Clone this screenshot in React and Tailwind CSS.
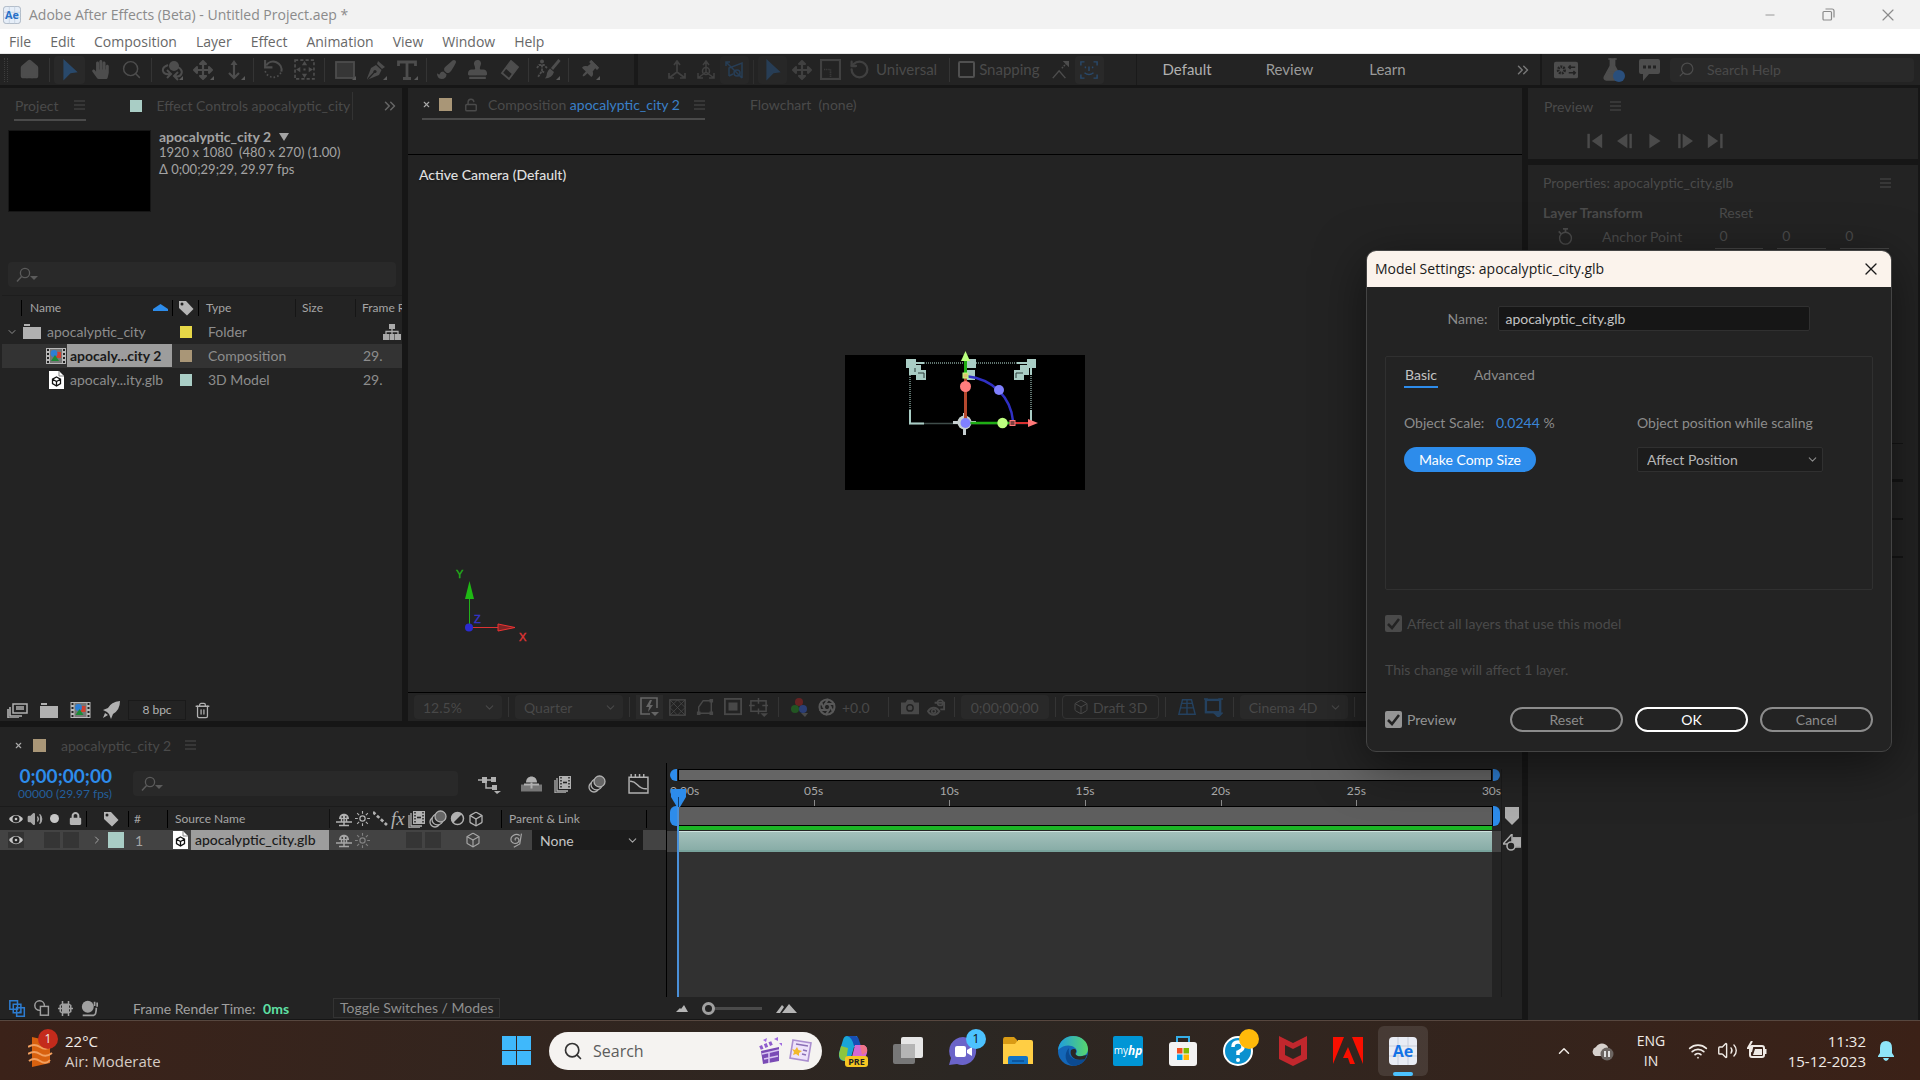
import {
  Home, Search, RotateCcw, X, Minus, LockOpen, Aperture, Trash2, ChevronDown,
  ChevronRight, ChevronUp, ChevronsRight, Wifi, Volume2, Box, FlaskConical,
} from "lucide-react";
import { FaHandPaper, FaEraser, FaStamp, FaPaintBrush, FaThumbtack, FaArrowsAlt, FaLock } from "react-icons/fa";

const menus = ["File", "Edit", "Composition", "Layer", "Effect", "Animation", "View", "Window", "Help"];

const rulerMarks = ["05s", "10s", "15s", "20s", "25s"];

function Svg({ w = 20, h, vb, className = "", children }) {
  return (
    <svg
      width={w}
      height={h || w}
      viewBox={vb || "0 0 20 20"}
      fill="none"
      stroke="currentColor"
      strokeWidth="1.6"
      className={`shrink-0 ${className}`}
      aria-hidden="true"
    >
      {children}
    </svg>
  );
}

function Divider({ className = "mx-1 h-6" }) {
  return <span className={`w-px shrink-0 bg-[#343434] ${className}`} />;
}

function Tool({ label, active, more, className = "w-[31px]", children }) {
  return (
    <button
      aria-label={label}
      className={`relative flex h-7 shrink-0 items-center justify-center rounded-sm ${className} ${
        active ? "bg-[#292929] text-[#29496b]" : "text-[#4d4d4d]"
      }`}
    >
      {children}
      {more && (
        <svg width="4" height="4" className="absolute right-1 bottom-1" aria-hidden="true">
          <path d="M4 0V4H0Z" fill="#5a5a5a" />
        </svg>
      )}
    </button>
  );
}

function Burger({ className = "" }) {
  return (
    <button aria-label="Panel menu" className={`text-[#4d4d4d] ${className}`}>
      <Svg w={11} h={10} vb="0 0 11 10">
        <path d="M0 1H11M0 5H11M0 9H11" strokeWidth="1" />
      </Svg>
    </button>
  );
}

function FieldSearch({ label, className = "" }) {
  return (
    <label className={`flex h-[25px] items-center rounded-sm bg-[#292929] px-2 text-[#5b5b5b] ${className}`}>
      <Svg w={22} h={16} vb="0 0 22 16">
        <circle cx="9" cy="6" r="4.6" strokeWidth="1.3" />
        <path d="M5.6 9.4 1 14.5" strokeWidth="1.5" />
        <path d="M14 9H22L18 13Z" fill="currentColor" stroke="none" />
      </Svg>
      <input aria-label={label} className="min-w-0 flex-1 bg-transparent outline-none" />
    </label>
  );
}

function CursorIcon() {
  return (
    <Svg w={22}>
      <path d="M4 0 17 12 10.500 13 4 19.500Z" fill="currentColor" stroke="none" />
    </Svg>
  );
}

function FilmIcon({ w = 20 }) {
  return (
    <Svg w={w} h={16} vb="0 0 20 16">
      <rect width="20" height="16" fill="#b9b9b9" stroke="none" />
      <path d="M2 1V15M18 1V15" stroke="#222" strokeWidth="2" strokeDasharray="2 2" />
      <rect x="4" y="1" width="12" height="14" fill="#777" stroke="none" />
      <rect x="10" y="4" width="5" height="6" fill="#d2402f" stroke="none" />
      <circle cx="8" cy="5.500" r="3.400" fill="#2d7fd4" stroke="none" />
      <path d="M9 7 13 13H5Z" fill="#1c8a35" stroke="none" />
    </Svg>
  );
}

function ModelIcon() {
  return (
    <Svg w={15} h={18} vb="0 0 15 18">
      <path d="M0 0H10L15 5V18H0Z" fill="#fff" stroke="none" />
      <path d="M10 0V5H15" stroke="#888" strokeWidth="1" />
      <path d="M7.500 6 11.500 8.200V12.600L7.500 15 3.500 12.600V8.200ZM3.500 8.200 7.500 10.500 11.500 8.200M7.500 10.500V15" stroke="#111" strokeWidth="1.300" />
    </Svg>
  );
}

function FolderIcon() {
  return (
    <Svg w={18} h={15} vb="0 0 18 15">
      <path d="M1 0H7V2H1Z M0 3H18V15H0Z" fill="#b1b1b1" stroke="none" />
    </Svg>
  );
}

function TagIcon() {
  return (
    <Svg w={16} h={16} vb="0 0 16 16">
      <path d="M1 1H8L15.500 9 9 15.500 1 8Z" fill="#b5b5b5" stroke="none" />
      <circle cx="4" cy="4" r="1.500" fill="#232323" stroke="none" />
    </Svg>
  );
}

function EyeIcon() {
  return (
    <Svg w={14} h={12} vb="0 0 14 12">
      <path d="M0 6C3 .5 11 .5 14 6 11 11.500 3 11.500 0 6Z" fill="#c6c6c6" stroke="none" />
      <circle cx="7" cy="6" r="3.500" fill="#232323" stroke="none" />
      <circle cx="7" cy="6" r="1.300" fill="#c6c6c6" stroke="none" />
    </Svg>
  );
}

function ShyIcon() {
  return (
    <Svg w={16} vb="0 0 16 16">
      <path d="M3 8C3 1 13 1 13 8Z" fill="currentColor" stroke="none" />
      <path d="M0 11H16M8 8V15M3 14.500H13M5.500 8V11M10.500 8V11" strokeWidth="1.500" />
      <path d="M5.500 6H7M9 6H10.500" stroke="#232323" strokeWidth="1.500" />
    </Svg>
  );
}

function SunIcon() {
  return (
    <Svg w={15} vb="0 0 16 16">
      <circle cx="8" cy="8" r="2.800" strokeWidth="1.300" />
      <path d="M8 0V3M8 13V16M0 8H3M13 8H16M2.300 2.300 4.400 4.400M11.600 11.600 13.700 13.700M2.300 13.700 4.400 11.600M11.600 4.400 13.700 2.300" strokeWidth="1.200" />
    </Svg>
  );
}

function FrameBlendIcon() {
  return (
    <Svg w={18} vb="0 0 18 18">
      <path d="M5 1H17V14H5Z" fill="currentColor" stroke="none" />
      <path d="M7 2V13M15 2V13" stroke="#232323" strokeWidth="1.500" strokeDasharray="1.500 1.500" />
      <path d="M9 7.500H13" stroke="#232323" />
      <path d="M3 3V16H14M1 5V18H12" strokeWidth="1.300" />
    </Svg>
  );
}

function BlurIcon() {
  return (
    <Svg w={18} vb="0 0 18 18">
      <circle cx="6" cy="12" r="5" strokeWidth="1.300" />
      <circle cx="8.500" cy="9.500" r="5.500" fill="#232323" strokeWidth="1.300" />
      <circle cx="11.500" cy="6.500" r="5.500" fill="#666" strokeWidth="1.300" />
    </Svg>
  );
}

function TitleBar() {
  return (
    <header>
      <div className="flex h-[29px] items-center bg-[#f2f2f2] pr-[3px] pl-[3px] font-['Open_Sans',sans-serif] text-[14px] text-[#8b8b8b]">
        <Svg w={18}>
          <rect x=".5" y=".5" width="19" height="19" rx="3" fill="#e6eef8" stroke="#a9b4c2" strokeWidth="1" />
          <path d="M7 0V20M13 0V20M0 7H20M0 13H20" stroke="#bcc9d8" strokeWidth=".7" />
          <text x="10" y="14" textAnchor="middle" fontSize="12" fontWeight="700" fill="#2a72c8" stroke="none">Ae</text>
        </Svg>
        <h1 className="ml-2 flex-1">Adobe After Effects (Beta) - Untitled Project.aep *</h1>
        <button aria-label="Minimize" className="w-[59px]"><Minus size={14} strokeWidth={1.5} className="mx-auto" /></button>
        <button aria-label="Restore" className="w-[59px]">
          <Svg w={13} vb="0 0 13 13" className="mx-auto">
            <rect x="1" y="3.500" width="8.500" height="8.500" rx="1" strokeWidth="1.200" />
            <path d="M3.500 1H10Q12 1 12 3V9.500" strokeWidth="1.200" />
          </Svg>
        </button>
        <button aria-label="Close" className="w-[59px]"><X size={20} strokeWidth={1.4} className="mx-auto" /></button>
      </div>
      <nav className="flex h-[25px] items-center gap-px border-b border-[#e8e8e8] bg-white font-['Open_Sans',sans-serif] text-[14px] text-[#686868]">
        {menus.map((m) => (
          <button key={m} className="px-[9px]">{m}</button>
        ))}
      </nav>
    </header>
  );
}

function Toolbar() {
  return (
    <div className="flex h-[31px] shrink-0 items-center bg-[#232323] pl-1">
      <span className="mr-[6px] h-6 w-1 border-x border-dotted border-[#3c3c3c]" />
      <Tool label="Home"><Home size={21} fill="currentColor" /></Tool>
      <Divider />
      <Tool label="Selection tool" active><CursorIcon /></Tool>
      <Tool label="Hand tool"><FaHandPaper size={19} /></Tool>
      <Tool label="Zoom tool"><Search size={21} strokeWidth={1.7} /></Tool>
      <Divider />
      <Tool label="Orbit tool" more>
        <Svg w={22} vb="0 0 22 20">
          <circle cx="13" cy="6" r="5" fill="currentColor" stroke="none" />
          <path d="M7 5C-1 8 1 15 9 14M17 7C24 11 20 18 14 16M6 10 10 14 6 18M17 12 13 16 17 20" strokeWidth="2" />
        </Svg>
      </Tool>
      <Tool label="Pan tool" more><FaArrowsAlt size={20} /></Tool>
      <Tool label="Dolly tool" more>
        <Svg w={20}><path d="M10 2V17M5 13 10 18 15 13" strokeWidth="2.200" /><path d="M10 0 13.500 5H6.500Z" fill="currentColor" stroke="none" /></Svg>
      </Tool>
      <Divider />
      <Tool label="Rotation tool">
        <Svg w={21}><path d="M3 6A8 8 0 0 1 17.500 12" strokeWidth="2" /><path d="M17 13A8 8 0 0 1 2 11" strokeDasharray="1.500 2" /><path d="M2 1V8H9" strokeWidth="2" /></Svg>
      </Tool>
      <Tool label="Pan behind tool">
        <Svg w={21}>
          <rect x="1" y="1" width="18" height="18" strokeDasharray="3 2" />
          <path d="M10 2 12.500 6H7.500ZM10 18 12.500 14H7.500ZM2 10 6 7.500V12.500ZM18 10 14 7.500V12.500ZM9 9H11V11H9Z" fill="currentColor" stroke="none" />
        </Svg>
      </Tool>
      <Divider />
      <Tool label="Rectangle tool" more><Svg w={20}><rect x="1" y="2" width="18" height="16" fill="#363636" strokeWidth="1.800" /></Svg></Tool>
      <Tool label="Pen tool" more>
        <Svg w={20}>
          <path d="M12 1 19 7 16 9 11 4Z" fill="currentColor" stroke="none" />
          <path d="M10 5 15.500 10 13 15 2 19.500 1 18.500 5 8Z" fill="currentColor" stroke="none" />
          <path d="M2 19 8.500 12" stroke="#232323" strokeWidth="1.200" />
          <circle cx="9" cy="11.500" r="1.600" fill="#232323" stroke="none" />
        </Svg>
      </Tool>
      <Tool label="Type tool" more>
        <Svg w={20}><path d="M1.500 6V2H18.500V6M10 2V18M6 18.500H14" strokeWidth="2.800" /></Svg>
      </Tool>
      <Divider />
      <Tool label="Brush tool"><FaPaintBrush size={19} /></Tool>
      <Tool label="Clone stamp tool"><FaStamp size={19} /></Tool>
      <Tool label="Eraser tool">
        <Svg w={20}>
          <path d="M12 1 19 7 10 19 3 13Z" strokeWidth="1.800" />
          <path d="M12 1 19 7 13.500 14.500 6.500 8.500Z" fill="currentColor" stroke="none" />
        </Svg>
      </Tool>
      <Divider />
      <Tool label="Roto brush tool" more>
        <Svg w={25} h={21} vb="0 0 25 21">
          <circle cx="6" cy="2.500" r="2" fill="currentColor" stroke="none" />
          <path d="M1 9 3 6H8L11 9M6 6V12L2 18M6 12 9 14" strokeWidth="1.800" strokeDasharray="2.500 1" />
          <path d="M23.500 1 16 10" strokeWidth="2.800" />
          <path d="M14 9.500 18 13Q16 19 9 19.500 11 17 11 14 12 11 14 9.500Z" fill="currentColor" stroke="none" />
        </Svg>
      </Tool>
      <Divider />
      <Tool label="Puppet pin tool" more><FaThumbtack size={18} className="rotate-45" /></Tool>
      <span className="mx-[30px] h-full w-1 bg-[#191919]" />
      <div className="-ml-[6px] flex opacity-70">
        <Tool label="Local axis mode" className="w-[29px]">
          <Svg w={20}><path d="M10 12V2M10 12 2 18M10 12 18 18M7 5 10 1 13 5M2 13V18H7M18 13V18H13" strokeWidth="1.700" /></Svg>
        </Tool>
        <Tool label="World axis mode" className="w-[29px]">
          <Svg w={20}><circle cx="10" cy="11" r="3.500" /><path d="M10 12V2M10 12 2 18M10 12 18 18M7 5 10 1 13 5M2 13V18H7M18 13V18H13" strokeWidth="1.500" /></Svg>
        </Tool>
        <Tool label="View axis mode" active className="w-[29px]">
          <Svg w={20}><path d="M4 16V8L17 3V17L13 15M1 2 17 18M1 6V2H5M4 16 8 14" strokeWidth="1.500" /><circle cx="12" cy="13" r="3" /></Svg>
        </Tool>
        <Divider className="mx-1 mt-1 h-6" />
        <Tool label="Universal gizmo" active className="w-[29px]"><CursorIcon /></Tool>
        <Tool label="Position gizmo" className="w-[29px]"><FaArrowsAlt size={20} /></Tool>
        <Tool label="Scale gizmo" className="w-[29px]"><Svg w={21}><rect x="1" y="1" width="18" height="18" strokeWidth="2" /><path d="M4 10H10V17" strokeDasharray="1 1" /></Svg></Tool>
        <Tool label="Rotation gizmo" className="w-[29px]"><RotateCcw size={21} strokeWidth={2.6} /></Tool>
      </div>
      <span className="ml-[2px] text-[15px] text-[#4a4a4a]">Universal</span>
      <Divider className="mr-2 ml-3 h-6" />
      <label className="flex items-center gap-1 text-[15px] text-[#4a4a4a]">
        <input type="checkbox" className="size-[17px] appearance-none rounded-xs border-2 border-[#505050]" />
        Snapping
      </label>
      <Tool label="Snap edges" className="ml-[6px] w-[29px]">
        <Svg w={18}><path d="M2 19 9 11 16 19" strokeWidth="1.600" /><path d="M12 8 17 3" strokeDasharray="2 1" /><path d="M13 0H20V7Z" fill="currentColor" stroke="none" /></Svg>
      </Tool>
      <Tool label="Snap features" active className="w-[29px]">
        <Svg w={18}><path d="M1 5V1H5M15 1H19V5M19 15V19H15M5 19H1V15M6 6V8M14 6V8M10 6V11M5 13Q10 17 15 13" strokeWidth="1.600" /></Svg>
      </Tool>
      <div className="ml-8 flex h-full flex-1 items-center border-l border-[#1a1a1a] pl-[26px] text-[15px] text-[#9a9a9a]">
        <button className="text-[#b0b0b0]">Default</button>
        <button className="ml-[54px]">Review</button>
        <button className="ml-[56px]">Learn</button>
        <button aria-label="More workspaces" className="ml-auto text-[#777]"><ChevronsRight size={18} /></button>
      </div>
      <span className="ml-2 h-full w-[2px] bg-[#191919]" />
      <div className="flex items-center gap-[10px] pr-[6px] pl-3 text-[#4d4d4d]">
        <button aria-label="Settings">
          <Svg w={24} h={18} vb="0 0 26 18">
            <rect width="26" height="18" rx="2" fill="currentColor" stroke="none" />
            <circle cx="8" cy="9" r="3.500" stroke="#232323" strokeWidth="3" strokeDasharray="2 1" />
            <path d="M16 6H23M18 4 16 6 18 8M16 12H23M21 10 23 12 21 14" stroke="#232323" />
          </Svg>
        </button>
        <button aria-label="Beta feedback" className="relative ml-3">
          <FlaskConical size={25} fill="#4d4d4d" strokeWidth={1.5} />
          <span className="absolute right-0 bottom-0 size-3 rounded-full bg-[#2a4f7c]" />
        </button>
        <button aria-label="Comments" className="ml-1">
          <Svg w={21} h={22} vb="0 0 21 22">
            <path d="M2 0H19Q21 0 21 2V13Q21 15 19 15H10L4 22V15H2Q0 15 0 13V2Q0 0 2 0Z" fill="currentColor" stroke="none" />
            <path d="M4 8H7M9 8H12M14 8H17" stroke="#232323" strokeWidth="3" />
          </Svg>
        </button>
        <label className="flex h-6 w-[244px] items-center gap-3 rounded-sm bg-[#292929] px-2">
          <Search size={17} strokeWidth={1.7} className="-scale-x-100" />
          <input aria-label="Search Help" placeholder="Search Help" className="min-w-0 flex-1 bg-transparent text-[14px] outline-none placeholder:text-[#4a4a4a]" />
        </label>
      </div>
    </div>
  );
}

const assets = [
  { name: "apocaly...city 2", type: "Composition", color: "bg-[#a99677]", icon: <FilmIcon />, selected: true },
  { name: "apocaly...ity.glb", type: "3D Model", color: "bg-[#a9cdc5]", icon: <ModelIcon /> },
];

function ProjectPanel() {
  return (
    <section className="flex w-[402px] shrink-0 flex-col bg-[#232323] pl-[2px]">
      <div className="flex h-9 shrink-0 items-center pr-[3px] pl-3 text-[14px] text-[#4a4a4a]">
        <button className="flex h-[30px] items-center gap-4 border-b-2 border-[#4a4a4a] px-px">
          Project
          <Svg w={11} h={10} vb="0 0 11 10"><path d="M0 1H11M0 5H11M0 9H11" strokeWidth="1" /></Svg>
        </button>
        <span className="ml-11 size-3 shrink-0 bg-[#a9cdc5]" />
        <button className="ml-[14px] min-w-0 flex-1 overflow-hidden border-r border-[#333] text-left leading-7 whitespace-nowrap">Effect Controls apocalyptic_city</button>
        <button aria-label="More panels" className="ml-7 text-[#666]"><ChevronsRight size={18} /></button>
      </div>
      <div className="flex gap-2 px-[6px] pt-[6px]">
        <div className="h-[82px] w-[143px] border border-[#161616] bg-black" />
        <div className="text-[13px] leading-[17px] text-[#a3a3a3]">
          <p className="flex items-center gap-2 text-[14px] leading-[14px] font-bold">
            apocalyptic_city 2
            <Svg w={10} h={8} vb="0 0 10 8"><path d="M0 0H10L5 8Z" fill="currentColor" stroke="none" /></Svg>
          </p>
          <p className="whitespace-pre">1920 x 1080  (480 x 270) (1.00)</p>
          <p>Δ 0;00;29;29, 29.97 fps</p>
        </div>
      </div>
      <FieldSearch label="Search project" className="mx-[6px] mt-[50px] shrink-0" />
      <table className="mt-2 w-full table-fixed border-t border-[#1d1d1d] text-left text-[14px] whitespace-nowrap text-[#8d8d8d]">
        <colgroup>
          <col className="w-[170px]" />
          <col className="w-[27px]" />
          <col className="w-[96px]" />
          <col className="w-[60px]" />
          <col />
        </colgroup>
        <thead>
          <tr className="h-6 text-[12px] text-[#a5a5a5]">
            <th className="pl-[19px] font-normal">
              <span className="flex h-4 items-center justify-between border-l border-black pr-1 pl-2">
                Name
                <Svg w={15} h={7} vb="0 0 15 7"><path d="M7.500 0 15 5V7H0V5Z" fill="#2d8ceb" stroke="none" /></Svg>
              </span>
            </th>
            <th aria-label="Label"><span className="flex h-4 items-center justify-center border-x border-black"><TagIcon /></span></th>
            <th className="pl-[7px] font-normal">Type</th>
            <th className="font-normal"><span className="block border-l border-[#161616] pl-[6px]">Size</span></th>
            <th className="overflow-hidden font-normal"><span className="block border-l border-[#161616] pl-[6px]">Frame R</span></th>
          </tr>
        </thead>
        <tbody>
          <tr className="h-6">
            <td>
              <span className="flex items-center pl-1">
                <ChevronDown size={12} />
                <span className="mr-[6px] ml-[5px]"><FolderIcon /></span>
                apocalyptic_city
              </span>
            </td>
            <td><span className="mx-auto block size-3 bg-[#e6d747]" /></td>
            <td className="pl-[9px]">Folder</td>
            <td />
            <td>
              <Svg w={18} h={16} vb="0 0 18 16" className="ml-[28px]">
                <path d="M6 0H12V5H6ZM0 10H6V16H0ZM12 10H18V16H12ZM6.500 10H11.500V16H6.500Z" fill="#aaa" stroke="none" />
                <path d="M9 5V10M3 10V7.500H15V10" stroke="#aaa" strokeWidth="1.300" />
              </Svg>
            </td>
          </tr>
          {assets.map((a) => (
            <tr key={a.name} className={a.selected ? "h-6 bg-[#333]" : "h-6"}>
              <td>
                <span className="flex items-center pl-11">
                  <span className="flex w-5 shrink-0 justify-center">{a.icon}</span>
                  <span className={a.selected ? "ml-px flex-1 bg-[#9d9d9d] pl-[3px] leading-[23px] font-bold text-[#1a1a1a]" : "ml-1"}>{a.name}</span>
                </span>
              </td>
              <td><span className={`mx-auto block size-3 ${a.color}`} /></td>
              <td className="pl-[9px]">{a.type}</td>
              <td />
              <td className="pl-2">29.</td>
            </tr>
          ))}
        </tbody>
      </table>
      <div className="mt-auto flex h-7 items-center gap-3 pt-[6px] pl-[5px] text-[#b1b1b1]">
        <button aria-label="Interpret footage">
          <Svg w={21} h={15} vb="0 0 21 15">
            <path d="M6 1H20V10H6Z" strokeWidth="1.500" /><path d="M9 4H17M9 6H17" strokeWidth="1.500" />
            <path d="M3 4V13H15M1 6V15H12" />
          </Svg>
        </button>
        <button aria-label="New folder"><FolderIcon /></button>
        <button aria-label="New composition"><FilmIcon w={21} /></button>
        <button aria-label="GPU acceleration">
          <Svg w={17} h={18} vb="0 0 17 18"><path d="M17 0Q8 1 5 7L0 9 4 11 6 13 8 18 10 13Q17 9 17 0ZM0 17 2 12 5 14Z" fill="currentColor" stroke="none" /></Svg>
        </button>
        <button className="-mx-1 h-5 w-[58px] border border-[#1a1a1a] text-[12px]">8 bpc</button>
        <button aria-label="Delete"><Trash2 size={17} strokeWidth={1.8} /></button>
      </div>
    </section>
  );
}

function Gizmo() {
  return (
    <svg width="240" height="135" viewBox="0 0 240 135" className="overflow-visible" role="img" aria-label="apocalyptic_city.glb transform gizmo">
      <rect width="240" height="135" fill="#000" />
      <g stroke="#a9cdc5" fill="none">
        <path d="M65 8H186V68.500H65Z" strokeWidth="1.500" strokeOpacity=".75" strokeDasharray="1 1" />
        <path d="M65 20V8H79M172 8H186V20M65 55V68.500H79M186 55V66M119 8H130" strokeWidth="2" />
      </g>
      <g fill="#a9cdc5">
        <path d="M61 4H71V13H61ZM66 10H76V20H66ZM71 15H81V25H71Z" />
        <path d="M182 4H191V13H182ZM175 10H184V20H175ZM169 15H179V25H169Z" />
        <path d="M121 4H131V13H121ZM120 15H130V25H120Z" />
        <path d="M73 18H79V23M178 18H171V23M70 17V13" fill="none" stroke="#2b3a38" />
      </g>
      <path d="M108 67.500H131M119.500 58V80" stroke="#c6cfd0" strokeWidth="3" />
      <circle cx="119.500" cy="67.500" r="7" fill="#c6cfd0" />
      <path d="M120.500 21C150 24 166 44 168 66" fill="none" stroke="#3030c4" strokeWidth="2.500" />
      <path d="M120.500 4V21" stroke="#1fae14" strokeWidth="3" />
      <path d="M120.500 21V65" stroke="#b5482e" strokeWidth="3" />
      <path d="M122 68H165" stroke="#1fae14" strokeWidth="2.500" />
      <path d="M170 68H184" stroke="#d93030" strokeWidth="2" />
      <path d="M120.500 -4 125 6H116Z" fill="#b9ff7e" />
      <path d="M193 68 183 64V72Z" fill="#ff7878" />
      <rect x="118" y="18" width="5" height="5" fill="#e0c070" stroke="#b9ff7e" />
      <rect x="165" y="65.500" width="5" height="5" fill="#804040" stroke="#ff7878" />
      <circle cx="120.500" cy="31.500" r="5.500" fill="#ff7d7d" />
      <circle cx="154" cy="35" r="5" fill="#8080ff" />
      <circle cx="157.500" cy="68" r="5.200" fill="#bdff80" />
      <circle cx="120.500" cy="68" r="5" fill="#8080ff" />
    </svg>
  );
}

function AxisWidget() {
  return (
    <svg width="90" height="80" viewBox="0 0 90 80" className="absolute bottom-12 left-[41px] font-['Liberation_Sans',sans-serif]" fontSize="11" role="img" aria-label="Axes">
      <path d="M20.500 63V30" stroke="#22b01a" />
      <path d="M20.500 17 25 35H16Z" fill="#1fb914" />
      <path d="M20 63.500H60" stroke="#d33" />
      <path d="M66 63.500 49 60V67Z" fill="#7c2525" stroke="#e33" />
      <circle cx="20" cy="63.500" r="4" fill="#2b2bd0" />
      <text x="7" y="14" fill="#22b01a" stroke="#22b01a" strokeWidth=".4">Y</text>
      <text x="25" y="59" fill="#3535cc" stroke="#3535cc" strokeWidth=".4">Z</text>
      <text x="70" y="77" fill="#e23535" stroke="#e23535" strokeWidth=".4">X</text>
    </svg>
  );
}

function FootSelect({ label, value, className }) {
  return (
    <span className={`relative flex h-6 items-center rounded-sm bg-[#292929] ${className}`}>
      <select aria-label={label} className="w-full appearance-none bg-transparent pl-[9px] outline-none">
        <option>{value}</option>
      </select>
      <ChevronDown size={13} className="pointer-events-none absolute right-[6px]" />
    </span>
  );
}

function ViewerFooter() {
  return (
    <div className="flex h-[29px] shrink-0 items-center overflow-hidden border-t border-black pl-[6px] text-[14px] text-[#484848]">
      <FootSelect label="Magnification" value="12.5%" className="w-[88px]" />
      <Divider className="mx-[6px] h-5" />
      <FootSelect label="Resolution" value="Quarter" className="w-[108px]" />
      <Divider className="mx-[6px] h-5" />
      <div className="flex items-center">
        <button aria-label="Fast previews" className="flex h-6 w-[27px] items-center justify-center bg-[#2a2a2a] text-[#666]">
          <Svg w={20}><path d="M17 11V1H1V17H10" /><path d="M10 3 6 10H9L8 15 13 8H10L12 3Z" fill="currentColor" stroke="none" /><path d="M11 15H19L15 19Z" fill="currentColor" stroke="none" /></Svg>
        </button>
        <button aria-label="Transparency grid" className="flex w-[28px] justify-center"><Svg w={17}><rect x="1" y="1" width="18" height="18" /><path d="M1 1 19 19M19 1 1 19M10 1 1 10 10 19 19 10Z" strokeWidth="1" /></Svg></button>
        <button aria-label="Masks" className="flex w-[28px] justify-center"><Svg w={18}><path d="M3 17V10L8 3H17V17Z" /><path d="M1 15H5V19H1ZM15 1H19V5H15ZM15 15H19V19H15Z" fill="currentColor" stroke="none" /></Svg></button>
        <button aria-label="Region of interest" className="flex w-[27px] justify-center"><Svg w={18}><rect x="1" y="1" width="18" height="17" strokeWidth="2" /><rect x="5" y="5" width="10" height="9" fill="currentColor" stroke="none" /></Svg></button>
        <button aria-label="Guides" className="flex w-6 justify-center"><Svg w={19}><rect x="2" y="3" width="16" height="11" /><path d="M10 0V6M10 11V17M0 8H6M14 8H20" /><path d="M12 16H20L16 20Z" fill="currentColor" stroke="none" /></Svg></button>
      </div>
      <Divider className="mx-2 h-5" />
      <button aria-label="Show channel" className="ml-[3px]">
        <Svg w={20}><circle cx="9" cy="5" r="4" fill="#662222" stroke="none" /><circle cx="5" cy="12" r="4" fill="#225522" stroke="none" /><circle cx="13" cy="12" r="4" fill="#2b3e75" stroke="none" /><path d="M11 16H18L15 20Z" fill="currentColor" stroke="none" /></Svg>
      </button>
      <button aria-label="Reset exposure" className="ml-2 text-[#585858]"><Aperture size={18} strokeWidth={2.8} /></button>
      <span className="ml-[6px]">+0.0</span>
      <Divider className="mr-3 ml-[18px] h-5" />
      <button aria-label="Snapshot">
        <Svg w={18}><path d="M0 5H5L7 2H13L15 5H20V18H0Z" fill="currentColor" stroke="none" /><circle cx="10" cy="11" r="3.500" stroke="#232323" /></Svg>
      </button>
      <button aria-label="Show snapshot" className="ml-2"><Svg w={19}><path d="M1 14C4 9 10 9 13 14 10 19 4 19 1 14Z" strokeWidth="2" /><circle cx="7" cy="14" r="2" /><path d="M8 5H18V12H14" strokeWidth="2" /><circle cx="14" cy="5" r="3" /></Svg></button>
      <Divider className="mr-[6px] ml-2 h-5" />
      <button className="h-6 w-[88px] rounded-sm bg-[#292929]">0;00;00;00</button>
      <Divider className="mx-[6px] h-5" />
      <button className="flex h-6 w-[97px] items-center justify-center gap-1 rounded-sm border border-[#333]"><Box size={16} strokeWidth={1.5} />Draft 3D</button>
      <Divider className="mx-[6px] h-5" />
      <button aria-label="3D ground plane" className="mx-[6px] text-[#24415f]"><Svg w={18}><path d="M5 2H15L19 18H1ZM10 2V18M3 11H17M4 6H16" /></Svg></button>
      <button aria-label="Extended viewer" className="mr-1 ml-[2px] text-[#24415f]"><Svg w={19}><rect x="2" y="2" width="15" height="13" strokeWidth="2.500" /><path d="M0 1H4M15 1H20M11 16H19L15 20Z" fill="currentColor" /></Svg></button>
      <Divider className="mx-[6px] h-5" />
      <FootSelect label="Renderer" value="Cinema 4D" className="w-[108px]" />
      <Divider className="mx-[6px] h-5" />
    </div>
  );
}

function Viewer() {
  return (
    <section className="flex min-w-0 flex-1 flex-col bg-[#232323]">
      <div className="flex h-[67px] shrink-0 items-start border-b border-black pl-[14px] text-[14px] text-[#4a4a4a]">
        <div className="flex h-8 items-center border-b-2 border-[#4a4a4a] pt-[3px]">
          <button aria-label="Close tab" className="text-[#aaa]"><X size={9} strokeWidth={3} /></button>
          <span className="mr-3 ml-[8px] size-[13px] bg-[#a99677]" />
          <LockOpen size={14} strokeWidth={2.5} />
          <button className="ml-[10px]">Composition <span className="text-[#3a80c8]">apocalyptic_city 2</span></button>
          <Burger className="ml-[14px]" />
        </div>
        <button className="ml-[45px] h-8 whitespace-pre">Flowchart  (none)</button>
      </div>
      <div className="relative flex flex-1 items-center justify-center pb-[3px]">
        <p className="absolute top-[9px] left-[11px] text-[14px] font-medium text-[#e0e0e0] text-shadow-sm">Active Camera (Default)</p>
        <Gizmo />
        <AxisWidget />
      </div>
      <ViewerFooter />
    </section>
  );
}

function LayerControls() {
  return (
    <div className="w-[667px] shrink-0 border-r border-black">
      <div className="flex h-[41px] items-center">
        <div className="w-[128px] shrink-0 pl-[14px]">
          <p className="w-[98px] text-right text-[19px] leading-5 font-bold text-[#2d8ceb]">0;00;00;00</p>
          <p className="w-[98px] text-right text-[12px] leading-4 whitespace-nowrap text-[#235f9c]">00000 (29.97 fps)</p>
        </div>
        <FieldSearch label="Search layers" className="ml-[5px] w-[325px]" />
        <div className="ml-5 flex flex-1 items-center text-[#b1b1b1]">
          <button aria-label="Mini-flowchart"><Svg w={23} h={20} vb="0 0 23 20"><path d="M0 6H14M8 6V14H15" strokeWidth="1.500" /><path d="M4 3H9V9H4ZM13 3H18V8H13ZM14 11H19V16H14ZM16 17H23L19 20Z" fill="currentColor" stroke="none" /></Svg></button>
          <button aria-label="Hide shy layers" className="ml-5"><Svg w={21} vb="0 0 21 20"><path d="M0 11H21V18H0Z" fill="#777" stroke="none" /><path d="M5 9C5 1 16 1 16 9Z" fill="currentColor" stroke="none" /><path d="M3 11H18M10.500 9V15" strokeWidth="2" /></Svg></button>
          <button aria-label="Frame blending" className="ml-3"><FrameBlendIcon /></button>
          <button aria-label="Motion blur" className="ml-4"><BlurIcon /></button>
          <button aria-label="Graph editor" className="ml-[22px]"><Svg w={21}><path d="M1 4H19V19H1ZM3 4V1M7 4V1M11 4V1M15 4V1M2 8C9 7 9 16 18 15" strokeWidth="1.400" /></Svg></button>
        </div>
      </div>
      <div className="mt-[2px] flex h-6 items-center border-t border-[#1b1b1b] pl-[9px] text-[12px] text-[#a5a5a5]">
        <div className="flex w-[77px] items-center gap-1">
          <EyeIcon />
          <Volume2 size={16} fill="currentColor" />
          <span className="mx-[3px] size-[9px] rounded-full bg-[#c6c6c6]" />
          <FaLock size={13} className="ml-[3px] text-[#b5b5b5]" />
        </div>
        <div className="flex h-4 w-[43px] items-center justify-center border-x border-black pl-[6px]"><TagIcon /></div>
        <span className="w-[38px] pl-[5px]">#</span>
        <span className="w-[162px] border-l border-black pl-[7px]">Source Name</span>
        <div className="flex w-[172px] items-center gap-[3px] border-l border-[#111] pl-[6px] text-[#b1b1b1]">
          <ShyIcon /><SunIcon />
          <Svg w={15} vb="0 0 14 14"><path d="M0 1 13 13" strokeWidth="2.500" strokeDasharray="3 2" /></Svg>
          <span className="font-['Liberation_Serif',serif] text-[19px] leading-none italic">fx</span>
          <FrameBlendIcon /><BlurIcon />
          <Svg w={15}><circle cx="10" cy="10" r="8" strokeWidth="2" /><path d="M16 4A8.500 8.500 0 0 0 4 16Z" fill="currentColor" stroke="none" /></Svg>
          <Box size={16} strokeWidth={2} />
        </div>
        <span className="w-[146px] border-x border-black pl-[7px]">Parent &amp; Link</span>
      </div>
      <div className="flex h-5 items-center bg-[#434343] pl-2 text-[14px] text-[#a5a5a5]">
        <button aria-label="Toggle visibility" className="flex h-4 w-4 items-center justify-center bg-[#333]"><EyeIcon /></button>
        <button aria-label="Solo" className="ml-5 size-4 bg-[#353535]" />
        <button aria-label="Lock" className="ml-[3px] size-4 bg-[#353535]" />
        <button aria-label="Expand layer" className="ml-3"><ChevronRight size={12} /></button>
        <span className="ml-[5px] size-4 bg-[#a9cdc5]" />
        <span className="w-[49px] pl-[11px]">1</span>
        <span className="flex w-[18px] shrink-0"><ModelIcon /></span>
        <span className="h-5 w-[138px] bg-[#9d9d9d] pl-1 leading-5 font-medium text-[#1a1a1a]">apocalyptic_city.glb</span>
        <div className="flex w-[178px] items-center gap-[3px] pl-[7px]">
          <ShyIcon />
          <span className="text-[#808080]"><SunIcon /></span>
          <span className="ml-[33px] size-4 bg-[#353535]" />
          <span className="size-4 bg-[#353535]" />
          <Box size={16} strokeWidth={1.8} className="ml-[21px]" />
        </div>
        <Svg w={17} className="mr-2"><path d="M10 10C8 7 13 5 14 9 15 14 7 15 5 11 3 5 10 1 15 4M17 2 15 14 8 18" strokeWidth="1.400" /></Svg>
        <span className="relative flex items-center">
          <select aria-label="Parent layer" className="h-5 w-[111px] appearance-none bg-[#1c1c1c] pl-2 text-[#c4c4c4] outline-none">
            <option>None</option>
          </select>
          <ChevronDown size={13} className="pointer-events-none absolute right-1" />
        </span>
      </div>
    </div>
  );
}

function TimeGraph() {
  return (
    <div className="relative flex min-w-0 flex-1 flex-col pr-[9px] pl-[11px] text-[12px] text-[#a8a8a8]">
      <div className="-mx-2 flex h-3 shrink-0">
        <span className="w-[7px] rounded-l-full bg-[#2d8ceb]" />
        <span className="mx-px flex-1 border border-black bg-[#656565]" />
        <span className="w-[7px] rounded-r-full bg-[#2d7cd0]" />
      </div>
      <div className="grid h-[25px] shrink-0 grid-cols-6">
        <span className="relative"><span className="absolute top-[3px] -left-2 leading-[14px]">0:00s</span></span>
        {rulerMarks.map((m) => (
          <span key={m} className="flex flex-col items-start pt-[3px]">
            <span className="-translate-x-1/2 leading-[14px]">{m}</span>
            <span className="mt-[2px] h-[6px] w-px bg-[#8a8a8a]" />
          </span>
        ))}
      </div>
      <span className="absolute top-[15px] right-0 leading-[14px]">30s</span>
      <div className="-mx-2 flex h-5 shrink-0">
        <span className="w-2 rounded-l-md bg-[#2d8ceb]" />
        <span className="flex-1 border border-black bg-[#5e5e5e]" />
        <span className="w-[7px] rounded-r-md bg-[#2d8ceb]" />
      </div>
      <div className="h-1 shrink-0 bg-[#1cb526]" />
      <div className="mt-px -mr-[9px] -ml-[11px] h-[21px] shrink-0 bg-[#434343] pr-[9px] pl-[11px]">
        <div className="h-full border-t border-[#cfe3de] border-b-2 border-b-[#78a39c] bg-linear-to-b from-[#a3c0bb] to-[#88ada7]" />
      </div>
      <div className="flex-1 bg-[#313131]" />
      <div className="absolute top-5 bottom-0 left-[10px] w-[2px] bg-[#4a90d9]">
        <svg width="15" height="18" viewBox="0 0 15 18" className="absolute -left-[6px]" aria-hidden="true">
          <path d="M0 0H15V8L9 18H6L0 8Z" fill="#2d8ceb" />
          <path d="M7.500 8V18" stroke="#123f6e" />
        </svg>
      </div>
    </div>
  );
}

function Timeline() {
  return (
    <section className="mt-[6px] flex h-[293px] shrink-0 flex-col bg-[#232323]">
      <div className="flex h-9 shrink-0 items-center pl-[14px] text-[14px] text-[#4a4a4a]">
        <button aria-label="Close timeline" className="text-[#aaa]"><X size={9} strokeWidth={3} /></button>
        <span className="mr-[15px] ml-[10px] size-[13px] bg-[#a99677]" />
        <button>apocalyptic_city 2</button>
        <Burger className="ml-[14px]" />
      </div>
      <div className="flex min-h-0 flex-1">
        <LayerControls />
        <div className="flex min-w-0 flex-1 pt-[6px]">
          <TimeGraph />
          <div className="flex w-[21px] flex-col items-center gap-[9px] border-l border-[#1b1b1b] pt-[38px] text-[#adadad]">
            <Svg w={14} h={18} vb="0 0 14 18"><path d="M0 0H14V11L7 18 0 11Z" fill="currentColor" stroke="none" /></Svg>
            <Svg w={18} h={17} vb="0 0 18 17"><path d="M0 10 9 0V8M10 4H18V13H10M0 10H4" strokeWidth="1.500" /><path d="M10 4H18V12H10Z" fill="currentColor" /><circle cx="8" cy="12" r="4" fill="#232323" /></Svg>
          </div>
        </div>
      </div>
      <div className="flex h-[23px] shrink-0 items-center border-b border-[#151515] pl-[9px] text-[14px] text-[#a0a0a0]">
        <div className="flex items-center gap-2">
          <button aria-label="Layer switches" className="text-[#2d7cd0]"><Svg w={17}><path d="M1 1H10V11H1ZM5 5H14V15H5ZM9 9H18V19H9ZM12 14H15" strokeWidth="1.800" /></Svg></button>
          <button aria-label="Transfer controls"><Svg w={16}><circle cx="7" cy="7" r="6" strokeWidth="1.800" /><rect x="8" y="8" width="10" height="11" fill="#232323" strokeWidth="1.800" /></Svg></button>
          <button aria-label="In and out"><Svg w={15}><path d="M6 0V4L3 6V14L6 16V20M14 0V4L17 6V14L14 16V20M0 10H20" strokeWidth="2" /><path d="M6 4H14V16H6Z" fill="currentColor" /></Svg></button>
          <button aria-label="Render time"><Svg w={17}><circle cx="8" cy="8" r="7" fill="currentColor" stroke="none" /><path d="M2 18H15Q18 17 18 9M16 2V7M19 3V8" strokeWidth="2" /></Svg></button>
        </div>
        <p className="ml-[35px]">Frame Render Time: <span className="ml-1 font-bold text-[#5fe0a5]">0ms</span></p>
        <button className="ml-11 h-5 border border-[#333] px-[6px] leading-none text-[#8f8f8f]">Toggle Switches / Modes</button>
        <div className="flex items-center text-[#b5b5b5]">
          <Svg w={12} h={7} vb="0 0 12 7" className="ml-[176px]"><path d="M0 7 4 3 5 4 8 0 12 7Z" fill="currentColor" stroke="none" /></Svg>
          <input
            type="range"
            aria-label="Timeline zoom"
            defaultValue="0"
            className="mx-[14px] h-3 w-[60px] appearance-none bg-transparent [&::-webkit-slider-runnable-track]:h-[3px] [&::-webkit-slider-runnable-track]:bg-[#4a4a4a] [&::-webkit-slider-thumb]:-mt-[5px] [&::-webkit-slider-thumb]:size-[13px] [&::-webkit-slider-thumb]:appearance-none [&::-webkit-slider-thumb]:rounded-full [&::-webkit-slider-thumb]:border-3 [&::-webkit-slider-thumb]:border-[#a0a0a0] [&::-webkit-slider-thumb]:bg-[#232323]"
          />
          <Svg w={21} h={9} vb="0 0 21 9"><path d="M0 9 6 1 8 3 4 9ZM6 9 13 0 21 9Z" fill="currentColor" stroke="none" /></Svg>
        </div>
      </div>
    </section>
  );
}

function RightColumn() {
  return (
    <aside className="flex w-[392px] shrink-0 flex-col gap-[6px] pr-[2px] text-[14px] text-[#4a4a4a]">
      <section className="h-[71px] shrink-0 bg-[#232323]">
        <div className="flex h-9 items-center pl-4">
          <h2>Preview</h2>
          <Burger className="ml-[17px]" />
        </div>
        <div className="flex gap-[14px] pt-[9px] pl-[59px]">
          <button aria-label="First frame"><Svg w={16}><path d="M2 1V19" strokeWidth="3" /><path d="M19 1V19L6 10Z" fill="currentColor" stroke="none" /></Svg></button>
          <button aria-label="Previous frame"><Svg w={16}><path d="M17 1V19" strokeWidth="3" /><path d="M13 1V19L0 10Z" fill="currentColor" stroke="none" /></Svg></button>
          <button aria-label="Play"><Svg w={16}><path d="M3 1V19L17 10Z" fill="currentColor" stroke="none" /></Svg></button>
          <button aria-label="Next frame"><Svg w={16}><path d="M3 1V19" strokeWidth="3" /><path d="M7 1V19L20 10Z" fill="currentColor" stroke="none" /></Svg></button>
          <button aria-label="Last frame"><Svg w={16}><path d="M18 1V19" strokeWidth="3" /><path d="M1 1V19L14 10Z" fill="currentColor" stroke="none" /></Svg></button>
        </div>
      </section>
      <section className="flex-1 bg-[#232323] pr-[15px] pl-[15px]">
        <div className="flex h-[35px] items-center justify-between pr-3">
          <h2>Properties: apocalyptic_city.glb</h2>
          <Burger />
        </div>
        <div className="flex h-6 items-center">
          <h3 className="w-44 font-bold">Layer Transform</h3>
          <button>Reset</button>
        </div>
        <div className="flex h-6 items-center">
          <Svg w={17} className="mr-[28px] ml-[14px]"><circle cx="10" cy="12" r="7" /><path d="M7 1H13M10 1V5M2 4 5 7" strokeWidth="2" /></Svg>
          <span className="w-[113px]">Anchor Point</span>
          {["x", "y", "z"].map((axis) => (
            <span key={axis} className="mr-[14px] w-[49px] border-b border-[#444] pl-[5px] leading-6">0</span>
          ))}
        </div>
        <div className="h-[196px] border-b border-[#151515]" />
        <div className="h-[38px] border-b-3 border-[#151515]" />
        <div className="h-[38px] border-b-2 border-[#151515]" />
        <div className="h-[38px] border-b-2 border-[#151515]" />
      </section>
    </aside>
  );
}

function DialogCheck({ label, muted }) {
  return (
    <label className={`relative flex items-center gap-[5px] ${muted ? "text-[#4a4a4a]" : "text-[#949494]"}`}>
      <input type="checkbox" defaultChecked disabled={muted} className={`size-[17px] appearance-none rounded-xs ${muted ? "bg-[#4a4a4a]" : "bg-[#949494]"}`} />
      <svg width="13" height="12" viewBox="0 0 13 12" className="pointer-events-none absolute left-[2px]" aria-hidden="true">
        <path d="M1 6 5 10 12 1" fill="none" stroke="#232323" strokeWidth="2.500" />
      </svg>
      {label}
    </label>
  );
}

function ModelSettings() {
  return (
    <div role="dialog" aria-label="Model Settings" className="absolute top-[250px] right-[28px] w-[526px] overflow-hidden rounded-[10px] border border-[#444] bg-[#232323] text-[14px] text-[#8c8c8c] shadow-[0_12px_50px_rgba(0,0,0,0.5)]">
      <div className="flex h-9 items-center justify-between bg-[#fbf3ec] pr-[10px] pl-2 font-['Open_Sans',sans-serif] text-[14px] text-[#1a1a1a]">
        <h2 className="pb-px">Model Settings: apocalyptic_city.glb</h2>
        <button aria-label="Close dialog"><X size={20} strokeWidth={1.6} /></button>
      </div>
      <div className="px-[18px] pt-[19px] pb-[19px]">
        <label className="flex items-center justify-center gap-[11px]">
          Name:
          <input defaultValue="apocalyptic_city.glb" className="h-[25px] w-[312px] rounded-xs border border-[#303030] bg-[#161616] px-[6px] text-[#c4c4c4] outline-none" />
        </label>
        <div className="mt-[25px] h-[234px] rounded-xs border border-[#303030] px-[18px] pt-[5px]">
          <div className="flex gap-9">
            <button className="h-[26px] border-b-2 border-[#2d8ceb] px-px text-[#c4c4c4]">Basic</button>
            <button className="h-6">Advanced</button>
          </div>
          <div className="mt-6 grid grid-cols-[233px_1fr] gap-y-[14px]">
            <p>Object Scale: <span className="ml-2 text-[#3a86d8]">0.0244</span> %</p>
            <label htmlFor="affect-position">Object position while scaling</label>
            <div>
              <button className="h-[25px] w-[132px] rounded-full bg-[#2d8ceb] text-white">Make Comp Size</button>
            </div>
            <div className="relative w-[186px]">
              <select id="affect-position" className="h-[25px] w-full appearance-none rounded-xs border border-[#303030] bg-[#1c1c1c] pl-[9px] text-[#b5b5b5] outline-none">
                <option>Affect Position</option>
              </select>
              <ChevronDown size={13} className="pointer-events-none absolute top-[6px] right-1" />
            </div>
          </div>
        </div>
        <div className="mt-[23px]"><DialogCheck label="Affect all layers that use this model" muted /></div>
        <p className="mt-[25px] text-[#4a4a4a]">This change will affect 1 layer.</p>
        <div className="mt-[27px] flex items-center gap-3">
          <div className="mr-auto"><DialogCheck label="Preview" /></div>
          <button className="h-[25px] w-[113px] rounded-full border-2 border-[#8c8c8c]">Reset</button>
          <button className="h-[25px] w-[113px] rounded-full border-2 border-white text-white">OK</button>
          <button className="h-[25px] w-[113px] rounded-full border-2 border-[#8c8c8c]">Cancel</button>
        </div>
      </div>
    </div>
  );
}

function AppButton({ label, badge, active, children }) {
  return (
    <button aria-label={label} className={`relative flex h-[50px] w-[50px] items-center justify-center rounded-md ${active ? "bg-white/10" : ""}`}>
      {children}
      {badge}
      {active && <span className="absolute bottom-0 h-1 w-5 rounded-full bg-[#4cc2ff]" />}
    </button>
  );
}

function Taskbar() {
  return (
    <footer className="flex h-[60px] shrink-0 items-center border-t border-[#57473f] bg-linear-to-r from-[#3b2219] via-[#2b2723] to-[#3b2117] font-['Open_Sans',sans-serif] text-[15px] text-[#f0ebe6]">
      <button className="relative flex w-[502px] items-center gap-3 pl-7 text-left leading-5">
        <Svg w={25} h={34} vb="0 0 25 34">
          <path d="M4 3 22 7V29L4 33Z" fill="#d8610f" stroke="none" />
          <path d="M0 13Q6 9 12 13T24 12M0 20Q6 16 12 20T24 19M1 27Q6 23 12 27T22 26" stroke="#f2a060" strokeWidth="2" />
        </Svg>
        <span className="absolute -top-[2px] left-[38px] flex size-5 items-center justify-center rounded-full bg-[#c42b1c] text-[12px]">1</span>
        <span>22°C<br /><span className="text-[#d6ccc5]">Air: Moderate</span></span>
      </button>
      <button aria-label="Start">
        <Svg w={29} vb="0 0 29 29">
          <path d="M0 0H14V14H0ZM15 0H29V14H15ZM0 15H14V29H0ZM15 15H29V29H15Z" fill="#3fb8fb" stroke="none" />
        </Svg>
      </button>
      <label className="ml-[18px] flex h-[38px] w-[273px] items-center gap-[10px] rounded-full bg-[#f5f3f1] pr-[10px] pl-[14px] text-[#333]">
        <Search size={20} strokeWidth={2} />
        <input aria-label="Search" placeholder="Search" className="min-w-0 flex-1 bg-transparent text-[16px] outline-none placeholder:text-[#5c5c5c]" />
        <Svg w={24} h={27} vb="0 0 24 27" className="-mr-[4px]">
          <path d="M2 14 20 10V24L4 27Z" fill="#7a4ab5" stroke="none" />
          <path d="M1 11 13 6" stroke="#8f5ccc" strokeWidth="4" strokeDasharray="3 2" />
          <path d="M3 17 20 13M5 22 19 19M10 16V26" stroke="#d9c5f2" />
          <path d="M4 3 8 1 7 5ZM15 2 19 0 19 4ZM20 6H23V9Z" fill="#a06be0" stroke="none" />
        </Svg>
        <Svg w={23} h={24} vb="0 0 23 24">
          <path d="M4 1 22 4 19 22 1 19Z" fill="#eee3fa" stroke="#ab8fd0" />
          <path d="M7 5 19 7M14 11 18 12M13 15 17 16" stroke="#8b70b5" />
          <path d="M8 8 9.500 11 13 12 10 14 10 17 7 15 4 16 5 13 3 10 6 11Z" fill="#f2b92c" stroke="none" />
        </Svg>
      </label>
      <div className="ml-[6px] flex gap-[5px]">
        <AppButton label="Copilot">
          <Svg w={30} h={32} vb="0 0 30 32">
            <path d="M9 1H19L22 12H16L12 26H6Q0 25 1 18L5 5Q6 1 9 1Z" fill="#19a5d8" stroke="none" />
            <path d="M3 11 10 13 8 26Q1 26 1 19Z" fill="#8cc63e" stroke="none" />
            <path d="M9 1H17Q20 1 21 5L23 11H16Q14 2 9 1Z" fill="#174fb5" stroke="none" />
            <path d="M17 10H25Q30 11 29 18L26 26H13Z" fill="#d568d2" stroke="none" />
            <path d="M22 10H26Q30 12 29 17L24 20Z" fill="#f0748a" stroke="none" />
            <rect x="7" y="21" width="23" height="11" rx="3" fill="#f6c622" stroke="none" />
            <text x="18.500" y="30" textAnchor="middle" fontSize="9" fontWeight="700" fill="#222" stroke="none">PRE</text>
          </Svg>
        </AppButton>
        <AppButton label="Task view">
          <Svg w={30} vb="0 0 30 30"><rect x="8" y="1" width="22" height="21" rx="2" fill="#e6e6e6" stroke="none" /><rect y="8" width="22" height="20" rx="2" fill="#777" stroke="none" /><path d="M8 8H22V22H8Z" fill="#b5b5b5" stroke="none" /></Svg>
        </AppButton>
        <AppButton
          label="Chat"
          badge={<span className="absolute top-[3px] right-[2px] flex size-5 items-center justify-center rounded-full bg-[#4cc2ff] text-[13px] text-[#111]">1</span>}
        >
          <Svg w={30} vb="0 0 30 30"><path d="M15 1A14 14 0 1 1 9 28L1 29 3 22A14 14 0 0 1 15 1Z" fill="#6a63c9" stroke="none" /><rect x="7" y="10" width="11" height="11" rx="2" fill="#fff" stroke="none" /><path d="M19 14 24 11V20L19 17Z" fill="#fff" stroke="none" /></Svg>
        </AppButton>
        <AppButton label="File Explorer">
          <Svg w={30} h={28} vb="0 0 30 28"><path d="M0 3Q0 0 2 0H11L14 3V10H0Z" fill="#d99b14" stroke="none" /><path d="M0 7 12 7 15 3H28Q30 3 30 5V27H0Z" fill="#ffce44" stroke="none" /><path d="M5 27V21Q5 19 7 19H23Q25 19 25 21V27Z" fill="#1374c5" stroke="none" /><path d="M9 24H21" stroke="#0c57a0" strokeWidth="2" /></Svg>
        </AppButton>
        <AppButton label="Edge">
          <Svg w={30} vb="0 0 30 30">
            <defs><linearGradient id="edge-top" x1="0" x2="1"><stop offset="0" stopColor="#1e9de0" /><stop offset="1" stopColor="#58d66c" /></linearGradient></defs>
            <circle cx="15" cy="15" r="15" fill="#1467b8" stroke="none" />
            <path d="M0 14C1 5 8 0 15 0 24 0 30 6 30 13 30 19 25 21 20 20 17 19 18 17 19 16 19 10 8 6 0 14Z" fill="url(#edge-top)" stroke="none" />
            <path d="M11 12C9 21 17 27 28 22 25 28 19 30 15 30 6 27 6 17 11 12Z" fill="#0b4a91" stroke="none" />
            <path d="M18 16C16 19 20 21 24 20L29 19 27 23C17 26 11 20 13 14 16 12 19 13 18 16Z" fill="#2b2723" stroke="none" />
          </Svg>
        </AppButton>
        <AppButton label="myHP"><span className="flex h-[30px] w-[30px] items-center justify-center rounded-xs bg-[#0096d6] text-[10px] text-white">my<i className="text-[12px] font-bold">hp</i></span></AppButton>
        <AppButton label="Microsoft Store">
          <Svg w={30} vb="0 0 30 30"><path d="M9 7V1H21V7" stroke="#35aee8" strokeWidth="2" /><rect x="1" y="6" width="28" height="24" rx="3" fill="#f3f3f3" stroke="none" /><path d="M9 12H14.500V17.500H9Z" fill="#f25022" stroke="none" /><path d="M15.500 12H21V17.500H15.500Z" fill="#7fba00" stroke="none" /><path d="M9 18.500H14.500V24H9Z" fill="#00a4ef" stroke="none" /><path d="M15.500 18.500H21V24H15.500Z" fill="#ffb900" stroke="none" /></Svg>
        </AppButton>
        <AppButton label="HP Support" badge={<span className="absolute top-[3px] right-[4px] size-5 rounded-full bg-[#ffb90a]" />}>
          <Svg w={30} vb="0 0 30 30"><circle cx="15" cy="15" r="14" fill="#0a91cf" stroke="#fff" strokeWidth="2" /><path d="M10 11Q10 6 15 6T20 11Q20 14 15 16V19" stroke="#fff" strokeWidth="3.500" /><circle cx="15" cy="24" r="2" fill="#fff" stroke="none" /></Svg>
        </AppButton>
        <AppButton label="McAfee">
          <Svg w={28} h={30} vb="0 0 28 30"><path d="M0 0 14 7 28 0V23L14 30 0 23ZM6 9V19L14 23 22 19V9L14 13Z" fill="#c1272d" fillRule="evenodd" stroke="none" /></Svg>
        </AppButton>
        <AppButton label="Adobe">
          <Svg w={30} h={27} vb="0 0 30 27"><path d="M0 0H11L0 27ZM19 0H30V27ZM15 10 22 27H17L15 21H10Z" fill="#fa0f00" stroke="none" /></Svg>
        </AppButton>
        <AppButton label="After Effects" active>
          <Svg w={28} vb="0 0 28 28"><rect width="28" height="28" rx="4" fill="#e9ecf4" stroke="none" /><path d="M9 0V28M19 0V28M0 9H28M0 19H28" stroke="#c8cedb" strokeWidth="1" /><text x="14" y="20" textAnchor="middle" fontSize="16" fontWeight="700" fill="#1473e6" stroke="none">Ae</text></Svg>
        </AppButton>
      </div>
      <div className="ml-auto flex items-center pr-[26px]">
        <button aria-label="Hidden icons"><ChevronUp size={18} /></button>
        <button aria-label="OneDrive" className="ml-[18px]"><Svg w={24} h={20} vb="0 0 24 20"><path d="M4 15A5 5 0 0 1 5 6 7 7 0 0 1 17 6V15Z" fill="#d6d0cc" stroke="none" /><circle cx="16" cy="13" r="6.500" fill="#6c6561" stroke="none" /><path d="M14 10V16M18 10V16" stroke="#fff" /></Svg></button>
        <button className="ml-[14px] w-11 text-center text-[14px] leading-5">ENG<br />IN</button>
        <button aria-label="Network, volume, battery" className="ml-[15px] flex items-center gap-[9px]">
          <Wifi size={20} />
          <Volume2 size={21} strokeWidth={1.6} />
          <Svg w={20}><rect x="3" y="5" width="14" height="11" rx="2" strokeWidth="2" /><path d="M18 8V13" strokeWidth="3" /><path d="M8 8H15V14H6Z" fill="currentColor" stroke="none" /><path d="M5 0 1 7H5L4 11" strokeWidth="2" /></Svg>
        </button>
        <button className="ml-4 w-[83px] text-right leading-5">11:32<br />15-12-2023</button>
        <button aria-label="Notifications" className="ml-3"><Svg w={16} h={20} vb="0 0 16 20"><path d="M8 0Q14 0 14 7V12L16 15V16H0V15L2 12V7Q2 0 8 0ZM5 17H11Q10 20 8 20T5 17Z" fill="#8fe5f8" stroke="none" /></Svg></button>
      </div>
    </footer>
  );
}

function App() {
  return (
    <div className="relative flex h-screen flex-col overflow-hidden bg-[#161616] font-['Lato',sans-serif]">
      <TitleBar />
      <Toolbar />
      <main className="mt-[3px] flex min-h-0 flex-1 gap-[6px]">
        <div className="flex min-w-0 flex-1 flex-col">
          <div className="flex min-h-0 flex-1 gap-[6px]">
            <ProjectPanel />
            <Viewer />
          </div>
          <Timeline />
        </div>
        <RightColumn />
      </main>
      <Taskbar />
      <ModelSettings />
    </div>
  );
}

export default App;
